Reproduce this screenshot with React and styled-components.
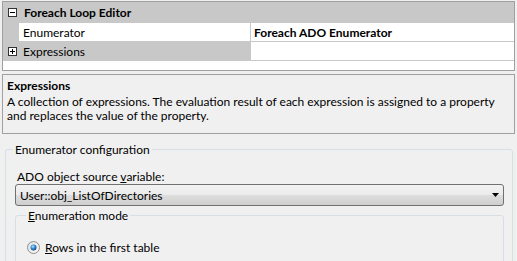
import { createGlobalStyle, styled } from 'styled-components'

const GlobalStyle = createGlobalStyle`
  html, body {
    margin: 0;
    background: #f0f0f0;
  }
  body {
    font-family: Lato, "Noto Sans", sans-serif;
    font-size: 12px;
    line-height: 15px;
    color: #000;
    overflow: hidden;
  }
`

function ToggleIcon({ open }) {
  return (
    <svg width="9" height="9" viewBox="0 0 9 9">
      <rect x="0.5" y="0.5" width="8" height="8" fill="#fff" stroke="#333" />
      <line x1="2" y1="4.5" x2="7" y2="4.5" stroke="#000" />
      {!open && <line x1="4.5" y1="2" x2="4.5" y2="7" stroke="#000" />}
    </svg>
  )
}

function ComboArrow() {
  return (
    <svg width="7" height="4" viewBox="0 0 7 4">
      <path d="M0 0h7L3.5 4z" fill="#000" />
    </svg>
  )
}

function RadioDot() {
  return (
    <svg width="13" height="13" viewBox="0 0 13 13">
      <defs>
        <radialGradient id="rg" cx="0.4" cy="0.35" r="0.7">
          <stop offset="0" stopColor="#b9e5ff" />
          <stop offset="0.5" stopColor="#2f8ad6" />
          <stop offset="1" stopColor="#123c68" />
        </radialGradient>
        <linearGradient id="rb" x1="0" y1="0" x2="1" y2="1">
          <stop offset="0" stopColor="#e0e0e0" />
          <stop offset="1" stopColor="#fafafa" />
        </linearGradient>
      </defs>
      <circle cx="6.5" cy="6.5" r="6" fill="url(#rb)" stroke="#8e8f8f" />
      <circle cx="6.5" cy="6.5" r="3" fill="url(#rg)" />
    </svg>
  )
}

function App() {
  return (
    <>
      <GlobalStyle />
      <Page>
        <Grid>
          <CategoryRow>
            <Margin><ToggleIcon open /></Margin>
            <CategoryLabel>Foreach Loop Editor</CategoryLabel>
          </CategoryRow>
          <PropRow>
            <Margin />
            <NameCell>Enumerator</NameCell>
            <ValueCell $bold>Foreach ADO Enumerator</ValueCell>
          </PropRow>
          <PropRow>
            <Margin><ToggleIcon /></Margin>
            <NameCell $selected>Expressions</NameCell>
            <ValueCell />
          </PropRow>
        </Grid>
        <Description>
          <DescTitle>Expressions</DescTitle>
          <DescText>
            A collection of expressions. The evaluation result of each expression is assigned to a property
            <br />
            and replaces the value of the property.
          </DescText>
        </Description>
        <Group>
          <GroupTitle>Enumerator configuration</GroupTitle>
          <FieldLabel>ADO object source <u>v</u>ariable:</FieldLabel>
          <Combo>
            <span>User::obj_ListOfDirectories</span>
            <ComboArrow />
          </Combo>
          <InnerGroup>
            <InnerTitle><u>E</u>numeration mode</InnerTitle>
            <RadioRow>
              <RadioDot />
              <span><u>R</u>ows in the first table</span>
            </RadioRow>
          </InnerGroup>
        </Group>
      </Page>
    </>
  )
}

const Page = styled.div`
  padding: 1px 2px 0 2px;
`
const Grid = styled.div`
  display: flex;
  flex-direction: column;
  height: 68px;
  border: 1px solid #a0a0a0;
  background: #fff;
`
const CategoryRow = styled.div`
  display: flex;
  align-items: center;
  height: 21px;
  background: #c8c8c8;
`
const Margin = styled.div`
  display: flex;
  align-items: center;
  justify-content: center;
  width: 16px;
  height: 100%;
  background: #c8c8c8;
  padding-left: 2px;
  box-sizing: border-box;
`
const CategoryLabel = styled.span`
  font-weight: bold;
  padding-left: 5px;
`
const PropRow = styled.div`
  display: grid;
  grid-template-columns: 16px 231px 1fr;
  height: 19px;
`
const NameCell = styled.div`
  display: flex;
  align-items: center;
  padding-left: 4px;
  background: ${(p) => (p.$selected ? '#c8c8c8' : '#fff')};
  border-bottom: 1px solid #c8c8c8;
`
const ValueCell = styled.div`
  display: flex;
  align-items: center;
  padding-left: 3px;
  font-weight: ${(p) => (p.$bold ? 'bold' : 'normal')};
  border-left: 1px solid #c8c8c8;
  border-bottom: 1px solid #c8c8c8;
`
const Description = styled.div`
  margin-top: 3px;
  height: 52px;
  padding: 3px 4px;
  border: 1px solid #a0a0a0;
`
const DescTitle = styled.div`
  font-weight: bold;
  line-height: 16px;
  margin-bottom: 1px;
`
const DescText = styled.div`
  line-height: 14px;
  white-space: nowrap;
`
const Group = styled.fieldset`
  margin: 8px 2px 0 3px;
  padding: 4px 8px 20px 9px;
  border: 1px solid #d5dfe5;
  border-radius: 3px;
`
const GroupTitle = styled.legend`
  padding: 0 2px;
  margin-left: -2px;
`
const FieldLabel = styled.div`
  padding-left: 2px;
  margin-top: 8px;
`
const Combo = styled.div`
  display: flex;
  align-items: center;
  justify-content: space-between;
  height: 20px;
  padding: 0 4px 0 4px;
  border: 1px solid #707070;
  border-radius: 3px;
  background: linear-gradient(#f2f2f2 0%, #ebebeb 48%, #dddddd 52%, #cfcfcf 100%);
`
const InnerGroup = styled.fieldset`
  margin: 2px 0 0 0;
  padding: 8px 10px 20px 10px;
  border: 1px solid #d5dfe5;
  border-radius: 3px;
`
const InnerTitle = styled.legend`
  padding: 0 2px;
`
const RadioRow = styled.div`
  display: flex;
  align-items: center;
  gap: 5px;
  margin-top: 9px;
  padding-left: 1px;
`

export default App
